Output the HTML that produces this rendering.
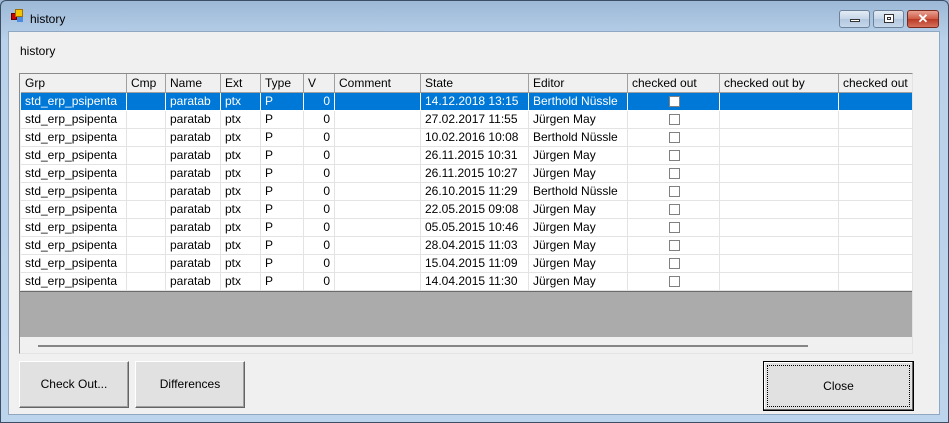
<!DOCTYPE html>
<html><head><style>
*{margin:0;padding:0;box-sizing:border-box}
body{width:949px;height:423px;overflow:hidden;font-family:"Liberation Sans",sans-serif;font-size:12px;color:#000;position:relative;background:linear-gradient(#9cb8d6,#b9d1ea 40px,#bcd4ec);}
.a{position:absolute}
.frame{left:0;top:0;width:949px;height:423px;border:1px solid #3c4e64;border-radius:6px 6px 0 0}
.client{left:8px;top:31px;width:932px;height:384px;background:#f0f0f0;border:1px solid #8fa7c0}
.tb{top:10px;height:18px;border:1px solid #6d819a;border-radius:3px;background:linear-gradient(#e4ecf5,#c5d5e7 50%,#b3c7de 51%,#c6d8ea)}
.grid{left:19px;top:73px;width:894px;height:281px;border:1px solid #8a8a8a;border-right-color:#e3e3e3;border-bottom-color:#e3e3e3;background:#f0f0f0;overflow:hidden}
.row{position:absolute;height:18px;width:892px;background:#fff}
.c{position:absolute;top:0;height:18px;line-height:17px;padding-left:4px;border-right:1px solid #e3e3e3;border-bottom:1px solid #e3e3e3;white-space:nowrap;overflow:hidden}
.hd .c{background:#f0f0f0;border-right:1px solid #a0a0a0;border-bottom:1px solid #a0a0a0;line-height:18px;height:19px}
.sel{background:#0078d7;color:#fff}
.sel .c{border-color:#fff}
.cb{position:absolute;left:41px;top:3px;width:11px;height:11px;border:1px solid #808080;background:#fff}
.btn{background:#e1e1e1;border:1px solid #fff;border-right-color:#646464;border-bottom-color:#646464;box-shadow:inset -1px -1px 0 #a0a0a0;text-align:center}
</style></head><body>
<div class="a frame"></div>
<div class="a" style="left:11px;top:13px;width:6px;height:7px;background:#c00;border:1px solid #600"></div>
<div class="a" style="left:15px;top:9px;width:8px;height:8px;background:#f5c400;border:1px solid #a07000"></div>
<div class="a" style="left:17px;top:17px;width:6px;height:5px;background:#4a8de0"></div>
<div class="a" style="left:30px;top:12px;font-size:12px">history</div>
<div class="a tb" style="left:839px;width:31px"><div class="a" style="left:10px;top:8px;width:10px;height:3px;background:#fff;border:1px solid #333"></div></div>
<div class="a tb" style="left:873px;width:31px"><div class="a" style="left:10px;top:3px;width:10px;height:9px;border:1px solid #333;background:#fff;box-shadow:inset 0 0 0 2px #fff,inset 0 0 0 3px #333"></div></div>
<div class="a tb" style="left:907px;width:32px;background:linear-gradient(#e8a093,#cf5a44 50%,#b83a25 51%,#d6705c);border-color:#7a2a1c;color:#fff;font-weight:bold;text-align:center;line-height:15px;font-size:13px">✕</div>
<div class="a client"></div>
<div class="a" style="left:20px;top:44px">history</div>
<div class="a grid">
<div class="row hd" style="top:0;left:1px;background:#f0f0f0">
<div class="c" style="left:0;width:106px">Grp</div><div class="c" style="left:106px;width:39px">Cmp</div><div class="c" style="left:145px;width:55px">Name</div><div class="c" style="left:200px;width:40px">Ext</div><div class="c" style="left:240px;width:43px">Type</div><div class="c" style="left:283px;width:31px">V</div><div class="c" style="left:314px;width:86px">Comment</div><div class="c" style="left:400px;width:108px">State</div><div class="c" style="left:508px;width:99px">Editor</div><div class="c" style="left:607px;width:92px">checked out</div><div class="c" style="left:699px;width:119px">checked out by</div><div class="c" style="left:818px;width:80px">checked out</div>
</div>
<div id="rows"></div>
<div class="a" style="left:0;top:217px;width:892px;height:46px;background:#ababab;border-top:1px solid #6a6a6a"></div>
<div class="a" style="left:18px;top:271px;width:770px;height:2px;background:#858585"></div>
</div>
<div class="a btn" style="left:19px;top:361px;width:110px;height:47px;line-height:45px">Check Out...</div>
<div class="a btn" style="left:135px;top:361px;width:110px;height:47px;line-height:45px">Differences</div>
<div class="a" style="left:763px;top:361px;width:151px;height:50px;border:1px solid #000;background:#e1e1e1;box-shadow:inset -1px -1px 0 #646464,inset 1px 1px 0 #fff"><div style="position:absolute;left:3px;top:3px;right:3px;bottom:3px;border:1px dotted #000;text-align:center;line-height:40px">Close</div></div>
<script>
var d=[["14.12.2018 13:15","Berthold Nüssle"],["27.02.2017 11:55","Jürgen May"],["10.02.2016 10:08","Berthold Nüssle"],["26.11.2015 10:31","Jürgen May"],["26.11.2015 10:27","Jürgen May"],["26.10.2015 11:29","Berthold Nüssle"],["22.05.2015 09:08","Jürgen May"],["05.05.2015 10:46","Jürgen May"],["28.04.2015 11:03","Jürgen May"],["15.04.2015 11:09","Jürgen May"],["14.04.2015 11:30","Jürgen May"]];
var h="";d.forEach(function(r,i){h+='<div class="row'+(i==0?' sel':'')+'" style="top:'+(19+i*18)+'px;left:1px"><div class="c" style="left:0;width:106px">std_erp_psipenta</div><div class="c" style="left:106px;width:39px"></div><div class="c" style="left:145px;width:55px">paratab</div><div class="c" style="left:200px;width:40px">ptx</div><div class="c" style="left:240px;width:43px">P</div><div class="c" style="left:283px;width:31px;text-align:right;padding-right:4px">0</div><div class="c" style="left:314px;width:86px"></div><div class="c" style="left:400px;width:108px">'+r[0]+'</div><div class="c" style="left:508px;width:99px">'+r[1]+'</div><div class="c" style="left:607px;width:92px"><div class="cb"></div></div><div class="c" style="left:699px;width:119px"></div><div class="c" style="left:818px;width:80px"></div></div>'});
document.getElementById("rows").innerHTML=h;
</script>
</body></html>
